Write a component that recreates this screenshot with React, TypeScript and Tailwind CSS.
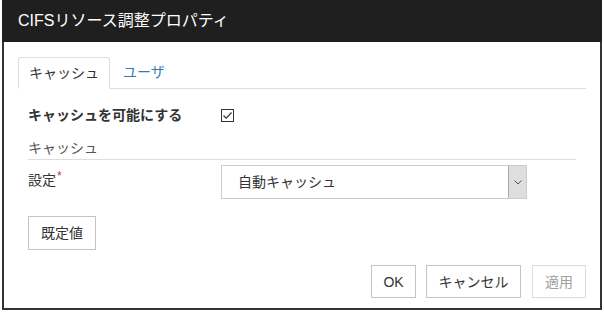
import React from 'react';

const font = "font-['Liberation_Sans','Noto_Sans_CJK_JP',sans-serif]";

const Btn = ({ label, className, disabled }: { label: string; className: string; disabled?: boolean }) => (
  <button
    className={`h-[33px] border text-[14px] leading-none bg-white ${
      disabled ? 'border-[#dcdcdc] text-[#a0a0a0]' : 'border-[#c4c4c4] text-[#333]'
    } ${className}`}
  >
    {label}
  </button>
);

const App = () => {
  return (
    <div className={`w-[604px] h-[312px] bg-white ${font}`}>
      <div className="ml-[2px] w-[600px] h-[310px] border-2 border-t-0 border-[#333] flex flex-col">
        <div className="h-[42px] bg-[#1f1f1f] -mx-[2px] flex items-center pl-[16px] shrink-0">
          <span className="text-white text-[16px] leading-none">CIFSリソース調整プロパティ</span>
        </div>

        {/* tabs */}
        <div className="mx-[14px] mt-[15px] flex items-end border-b border-[#ddd]">
          <div className="h-[32px] -mb-px px-[10px] border border-[#ddd] border-b-white bg-white rounded-t-[3px] flex items-center text-[14px] text-[#333]">
            キャッシュ
          </div>
          <div className="h-[31px] px-[13px] flex items-center text-[14px] text-[#337ab7]">ユーザ</div>
        </div>

        <div className="px-[24px] flex flex-col">
          <div className="mt-[16px] h-[20px] flex items-center">
            <span className="w-[193px] text-[14px] font-bold text-[#333]">キャッシュを可能にする</span>
            <span className="w-[13px] h-[13px] border border-[#333] flex items-center justify-center">
              <svg width="11" height="11" viewBox="0 0 11 11">
                <path d="M1.5 5.5 L4.2 8.2 L9.5 2.5" fill="none" stroke="#333" strokeWidth="1.2" />
              </svg>
            </span>
          </div>

          <div className="mt-[13px] h-[22px] pb-[1px] border-b border-[#ddd] text-[14px] leading-[20px] text-[#555]">
            キャッシュ
          </div>

          <div className="mt-[5px] h-[34px] flex items-center">
            <span className="w-[193px] text-[14px] leading-[20px] text-[#333] -mt-[4px] flex items-start">
              設定<span className="text-[#a94442] text-[12px] leading-none ml-px">*</span>
            </span>
            <div className="w-[306px] h-[34px] border border-[#ccc] flex items-stretch">
              <span className="flex-1 pl-[16px] flex items-center text-[14px] text-[#333]">自動キャッシュ</span>
              <span className="w-[18px] bg-[#dedede] border-l border-[#aaa] flex items-center justify-center">
                <svg width="8" height="5" viewBox="0 0 8 5">
                  <path d="M0.5 0.5 L4 4 L7.5 0.5" fill="none" stroke="#555" strokeWidth="1" />
                </svg>
              </span>
            </div>
          </div>

          <div className="mt-[17px]">
            <Btn label="既定値" className="w-[68px] h-[34px]" />
          </div>
        </div>

        <div className="mt-[15px] pr-[14px] flex justify-end gap-[10px]">
          <Btn label="OK" className="w-[45px]" />
          <Btn label="キャンセル" className="w-[95px]" />
          <Btn label="適用" className="w-[54px] ml-px" disabled />
        </div>
      </div>
    </div>
  );
};

export default App;
